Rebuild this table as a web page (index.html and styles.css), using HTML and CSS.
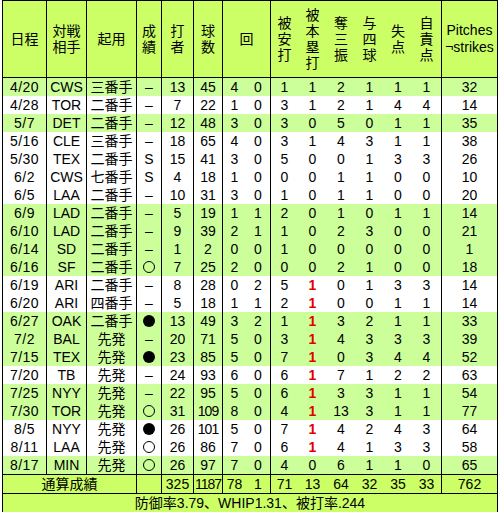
FILE: index.html
```html
<!DOCTYPE html>
<html lang="ja">
<head>
<meta charset="utf-8">
<link rel="stylesheet" href="styles.css">
</head>
<body>
<div class="tbl">
  <div class="row head">
    <div>日程</div>
    <div class="bl">対戦<br>相手</div>
    <div class="bl">起用</div>
    <div class="bl">成<br>績</div>
    <div class="bl">打<br>者</div>
    <div class="bl">球<br>数</div>
    <div class="bl inn">回</div>
    <div class="bl">被<br>安<br>打</div>
    <div>被<br>本<br>塁<br>打</div>
    <div>奪<br>三<br>振</div>
    <div>与<br>四<br>球</div>
    <div>失<br>点</div>
    <div>自<br>責<br>点</div>
    <div class="bl pt">Pitches<br>¬strikes</div>
  </div>

  <div class="row d g"><span>4/20</span><span>CWS</span><span>三番手</span><span>–</span><span>13</span><span>45</span><span>4</span><span>0</span><span>1</span><span>1</span><span>2</span><span>1</span><span>1</span><span>1</span><span>32</span></div>
  <div class="row d w"><span>4/28</span><span>TOR</span><span>二番手</span><span>–</span><span>7</span><span>22</span><span>1</span><span>0</span><span>3</span><span>1</span><span>2</span><span>1</span><span>4</span><span>4</span><span>14</span></div>
  <div class="row d g"><span>5/7</span><span>DET</span><span>二番手</span><span>–</span><span>12</span><span>48</span><span>3</span><span>0</span><span>3</span><span>0</span><span>5</span><span>0</span><span>1</span><span>1</span><span>35</span></div>
  <div class="row d w"><span>5/16</span><span>CLE</span><span>三番手</span><span>–</span><span>18</span><span>65</span><span>4</span><span>0</span><span>3</span><span>1</span><span>4</span><span>3</span><span>1</span><span>1</span><span>38</span></div>
  <div class="row d w"><span>5/30</span><span>TEX</span><span>二番手</span><span>S</span><span>15</span><span>41</span><span>3</span><span>0</span><span>5</span><span>0</span><span>0</span><span>1</span><span>3</span><span>3</span><span>26</span></div>
  <div class="row d w"><span>6/2</span><span>CWS</span><span>七番手</span><span>S</span><span>4</span><span>18</span><span>1</span><span>0</span><span>0</span><span>0</span><span>1</span><span>1</span><span>0</span><span>0</span><span>10</span></div>
  <div class="row d w"><span>6/5</span><span>LAA</span><span>二番手</span><span>–</span><span>10</span><span>31</span><span>3</span><span>0</span><span>1</span><span>0</span><span>1</span><span>1</span><span>0</span><span>0</span><span>20</span></div>
  <div class="row d g"><span>6/9</span><span>LAD</span><span>二番手</span><span>–</span><span>5</span><span>19</span><span>1</span><span>1</span><span>2</span><span>0</span><span>1</span><span>0</span><span>1</span><span>1</span><span>14</span></div>
  <div class="row d g"><span>6/10</span><span>LAD</span><span>二番手</span><span>–</span><span>9</span><span>39</span><span>2</span><span>1</span><span>1</span><span>0</span><span>2</span><span>3</span><span>0</span><span>0</span><span>21</span></div>
  <div class="row d g"><span>6/14</span><span>SD</span><span>二番手</span><span>–</span><span>1</span><span>2</span><span>0</span><span>0</span><span>1</span><span>0</span><span>0</span><span>0</span><span>0</span><span>0</span><span>1</span></div>
  <div class="row d g"><span>6/16</span><span>SF</span><span>二番手</span><span><i class="mk o"></i></span><span>7</span><span>25</span><span>2</span><span>0</span><span>0</span><span>0</span><span>2</span><span>1</span><span>0</span><span>0</span><span>18</span></div>
  <div class="row d w"><span>6/19</span><span>ARI</span><span>二番手</span><span>–</span><span>8</span><span>28</span><span>0</span><span>2</span><span>5</span><span class="r">1</span><span>0</span><span>1</span><span>3</span><span>3</span><span>14</span></div>
  <div class="row d w"><span>6/20</span><span>ARI</span><span>四番手</span><span>–</span><span>5</span><span>18</span><span>1</span><span>1</span><span>2</span><span class="r">1</span><span>0</span><span>0</span><span>1</span><span>1</span><span>14</span></div>
  <div class="row d g"><span>6/27</span><span>OAK</span><span>二番手</span><span><i class="mk b"></i></span><span>13</span><span>49</span><span>3</span><span>2</span><span>1</span><span class="r">1</span><span>3</span><span>2</span><span>1</span><span>1</span><span>33</span></div>
  <div class="row d g"><span>7/2</span><span>BAL</span><span>先発</span><span>–</span><span>20</span><span>71</span><span>5</span><span>0</span><span>3</span><span class="r">1</span><span>4</span><span>3</span><span>3</span><span>3</span><span>39</span></div>
  <div class="row d g"><span>7/15</span><span>TEX</span><span>先発</span><span><i class="mk b"></i></span><span>23</span><span>85</span><span>5</span><span>0</span><span>7</span><span class="r">1</span><span>0</span><span>3</span><span>4</span><span>4</span><span>52</span></div>
  <div class="row d w"><span>7/20</span><span>TB</span><span>先発</span><span>–</span><span>24</span><span>93</span><span>6</span><span>0</span><span>6</span><span class="r">1</span><span>7</span><span>1</span><span>2</span><span>2</span><span>63</span></div>
  <div class="row d g"><span>7/25</span><span>NYY</span><span>先発</span><span>–</span><span>22</span><span>95</span><span>5</span><span>0</span><span>6</span><span class="r">1</span><span>3</span><span>3</span><span>1</span><span>1</span><span>54</span></div>
  <div class="row d g"><span>7/30</span><span>TOR</span><span>先発</span><span><i class="mk o"></i></span><span>31</span><span class="tight">109</span><span>8</span><span>0</span><span>4</span><span class="r">1</span><span>13</span><span>3</span><span>1</span><span>1</span><span>77</span></div>
  <div class="row d w"><span>8/5</span><span>NYY</span><span>先発</span><span><i class="mk b"></i></span><span>26</span><span class="tight">101</span><span>5</span><span>0</span><span>7</span><span class="r">1</span><span>4</span><span>2</span><span>4</span><span>3</span><span>64</span></div>
  <div class="row d w"><span>8/11</span><span>LAA</span><span>先発</span><span><i class="mk o"></i></span><span>26</span><span>86</span><span>7</span><span>0</span><span>6</span><span class="r">1</span><span>4</span><span>1</span><span>3</span><span>3</span><span>58</span></div>
  <div class="row d g"><span>8/17</span><span>MIN</span><span>先発</span><span><i class="mk o"></i></span><span>26</span><span>97</span><span>7</span><span>0</span><span>4</span><span>0</span><span>6</span><span>1</span><span>1</span><span>0</span><span>65</span></div>

  <div class="row tot"><span class="sp3">通算成績</span><span class="bl"></span><span class="bl">325</span><span class="bl tight">1187</span><span class="bl">78</span><span>1</span><span class="bl">71</span><span>13</span><span>64</span><span>32</span><span>35</span><span>33</span><span class="bl">762</span></div>
  <div class="row fin"><span>防御率3.79、WHIP1.31、被打率.244</span></div>
</div>
</body>
</html>
```

FILE: styles.css
```css
html, body {
  margin: 0;
  padding: 0;
  background: #ffffff;
}

body {
  font-family: "Liberation Sans", "Noto Sans CJK JP", sans-serif;
  font-size: 14px;
  color: #000000;
}

.tbl {
  margin-left: 2px;
  width: 496px;
  border: 1px solid #000000;
  box-sizing: border-box;
}

.row {
  display: grid;
  grid-template-columns: 43px 40px 50px 25px 32px 29px 24px 24px 28px 29px 28px 29px 28px 29px 56px;
}

.row > * {
  box-sizing: border-box;
  display: flex;
  align-items: center;
  justify-content: center;
  text-align: center;
  white-space: nowrap;
}

.head {
  height: 76px;
  background: #ccff66;
  border-bottom: 1px solid #000000;
  line-height: 16px;
}

.head .inn {
  grid-column: span 2;
}

.head .pt {
  line-height: 17px;
}

.bl {
  border-left: 1px solid #000000;
}

.d {
  height: 18px;
  line-height: 18px;
}

.d.g {
  background: #ccff99;
}

.d.w {
  background: #ffffff;
}

.d > :nth-child(1) {
  letter-spacing: 0.5px;
}

.d > :nth-child(2),
.d > :nth-child(3),
.d > :nth-child(4),
.d > :nth-child(5),
.d > :nth-child(6),
.d > :nth-child(7),
.d > :nth-child(9),
.d > :nth-child(15) {
  border-left: 1px solid #000000;
}

.tight {
  letter-spacing: -1px;
}

.r {
  color: #e00000;
  font-weight: bold;
}

.mk {
  display: block;
  width: 12px;
  height: 12px;
  border-radius: 50%;
  box-sizing: border-box;
}

.mk.o {
  border: 1px solid #000000;
}

.mk.b {
  background: #000000;
}

.tot {
  height: 18px;
  line-height: 17px;
  background: #ccff66;
  border-top: 1px solid #000000;
}

.tot .sp3 {
  grid-column: span 3;
}

.fin {
  height: 18px;
  line-height: 17px;
  background: #ccff66;
  border-top: 1px solid #000000;
  grid-template-columns: 1fr;
}
```
